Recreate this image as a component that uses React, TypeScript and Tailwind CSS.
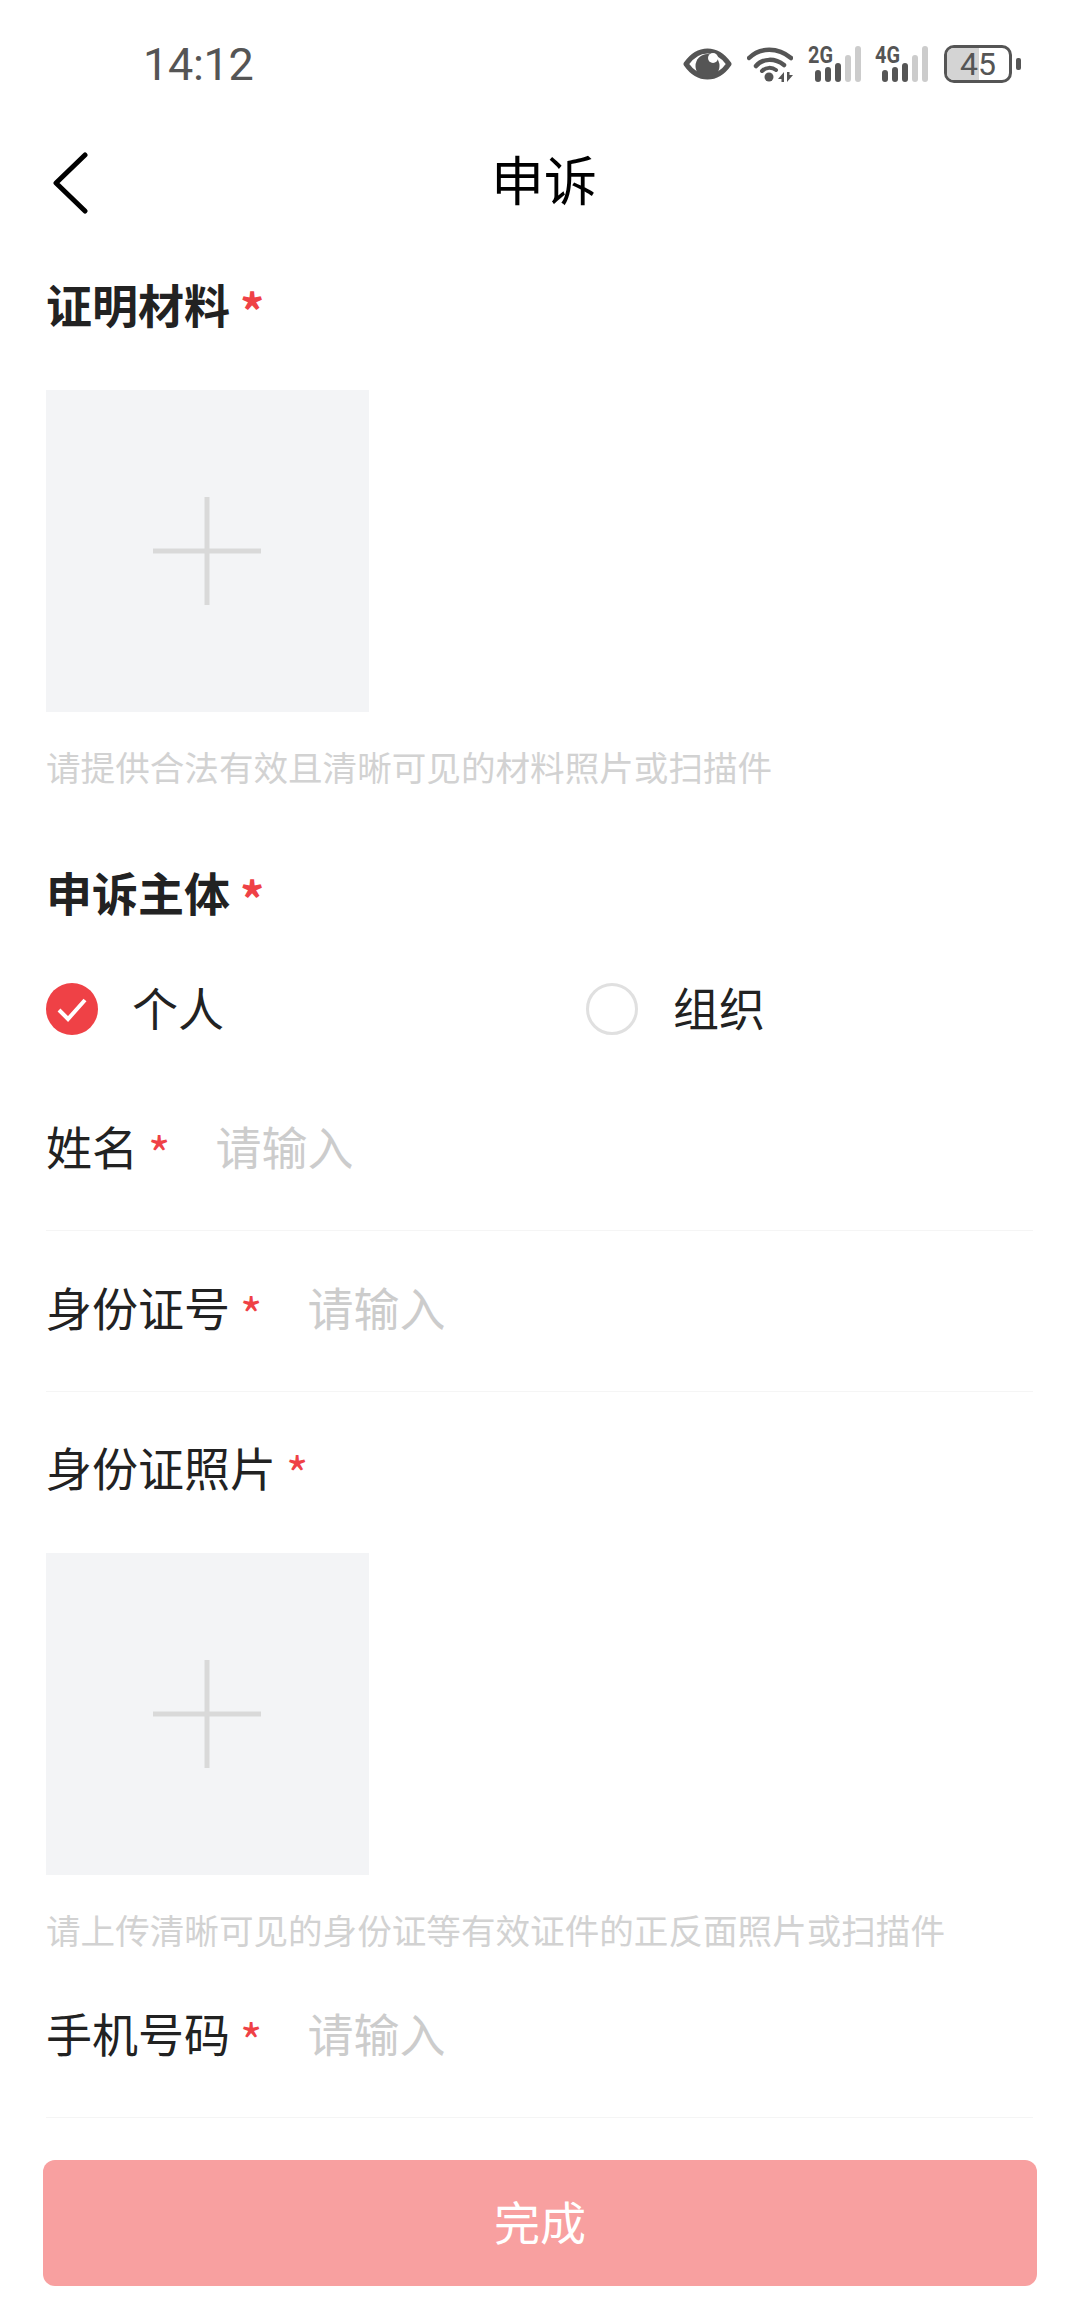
import React from 'react';

const CJK = "font-['Noto_Sans_CJK_SC','Noto_Sans',sans-serif]";

function Star({ bold = false }: { bold?: boolean }) {
  return (
    <span className={`ml-[10px] pt-[12px] text-[#ef4146] text-[48px] ${bold ? 'font-bold' : 'font-normal'}`}>*</span>
  );
}

function SectionTitle({ text }: { text: string }) {
  return (
    <div className="h-[72px] pb-[6px] flex items-center text-[46px] leading-[66px] font-bold text-[#222222]">
      {text}
      <Star bold />
    </div>
  );
}

function UploadBox() {
  return (
    <div className="w-[323px] h-[322px] mt-[48px] pr-[1px] bg-[#f3f4f6] flex items-center justify-center">
      <svg width="108" height="108" viewBox="0 0 108 108">
        <path d="M0 54H108M54 0V108" stroke="#d9d9d9" strokeWidth="5" />
      </svg>
    </div>
  );
}

function Hint({ text }: { text: string }) {
  return <div className="mt-[29px] h-[50px] text-[34.6px] leading-[50px] text-[#d2d2d2] whitespace-nowrap">{text}</div>;
}

function InputRow({ label, gap }: { label: string; gap: string }) {
  return (
    <div className="h-[161px] pb-[9px] flex items-center border-b border-[#f5f5f5] text-[46px] text-[#222222]">
      <span>{label}</span>
      <Star />
      <span className={`${gap} text-[#cccccc]`}>请输入</span>
    </div>
  );
}

function EyeIcon() {
  return (
    <svg width="49" height="32" viewBox="0 0 49 32">
      <path d="M3 16C10 6 17 3 24.5 3S39 6 46 16C39 26 32 29 24.5 29S10 26 3 16Z" fill="none" stroke="#555555" strokeWidth="5" strokeLinejoin="round" />
      <circle cx="24.5" cy="18" r="12" fill="#555555" />
      <circle cx="30" cy="10" r="5" fill="#ffffff" />
    </svg>
  );
}

function WifiIcon() {
  return (
    <svg width="46" height="36" viewBox="0 0 46 36">
      <path d="M2 12C13 1 31 1 44 12" fill="none" stroke="#555555" strokeWidth="4.5" strokeLinecap="round" />
      <path d="M9 20C16 12 28 12 37 19" fill="none" stroke="#555555" strokeWidth="4.5" strokeLinecap="round" />
      <path d="M15 25C19 21 25 21 29 24" fill="none" stroke="#555555" strokeWidth="4" strokeLinecap="round" />
      <circle cx="22" cy="31" r="4.5" fill="#555555" />
      <path d="M37 26V36H34.5V33H31ZM40 26H42.5V29H46L40 36Z" fill="#555555" />
    </svg>
  );
}

function SignalIcon({ label }: { label: string }) {
  const bars = [
    { x: 7, h: 12, c: '#555555' },
    { x: 17, h: 15, c: '#555555' },
    { x: 27, h: 19, c: '#555555' },
    { x: 37, h: 27, c: '#cccccc' },
    { x: 47, h: 36, c: '#cccccc' },
  ];
  return (
    <svg width="53" height="48" viewBox="0 -6 53 48">
      <text x="0" y="17" fontFamily="Roboto, sans-serif" fontWeight="700" fontSize="24" fill="#555555" textLength="25" lengthAdjust="spacingAndGlyphs">
        {label}
      </text>
      {bars.map((b) => (
        <rect key={b.x} x={b.x} y={36 - b.h} width="6" height={b.h} rx="3" fill={b.c} />
      ))}
    </svg>
  );
}

function Battery() {
  return (
    <div className="flex items-center">
      <div className="relative w-[68px] h-[38px] rounded-[10px] border-[3px] border-[#555555] overflow-hidden flex items-center justify-center">
        <div className="absolute left-0 top-0 bottom-0 w-[32px] bg-[#d4d4d4]" />
        <span className="relative text-[32px] leading-none text-[#555555] font-['Roboto',sans-serif]">45</span>
      </div>
      <div className="ml-[4px] w-[5px] h-[12px] rounded-[2px] bg-[#555555]" />
    </div>
  );
}

export default function App() {
  return (
    <div className={`w-[1080px] h-[2310px] bg-white overflow-hidden ${CJK}`}>
      {/* Status bar */}
      <div className="h-[128px] pl-[143px] pr-[59px] flex items-center justify-between">
        <span className="text-[45px] tracking-[-0.3px] leading-none text-[#555555] font-['Roboto',sans-serif]">14:12</span>
        <div className="flex items-center">
          <EyeIcon />
          <div className="ml-[15px]"><WifiIcon /></div>
          <div className="ml-[15px]"><SignalIcon label="2G" /></div>
          <div className="ml-[14px]"><SignalIcon label="4G" /></div>
          <div className="ml-[16px]"><Battery /></div>
        </div>
      </div>

      {/* Header */}
      <div className="relative h-[110px] flex items-center justify-center">
        <svg className="absolute left-[52px] top-[24px]" width="38" height="62" viewBox="0 0 38 62">
          <path d="M33 3L4 31L33 59" fill="none" stroke="#000000" strokeWidth="5" strokeLinecap="round" strokeLinejoin="round" />
        </svg>
        <span className="ml-[8px] pb-[9px] text-[53px] text-black">申诉</span>
      </div>

      {/* Form */}
      <div className="px-[46px] w-[1034px] box-content">
        <div className="mt-[32px]"><SectionTitle text="证明材料" /></div>
        <UploadBox />
        <Hint text="请提供合法有效且清晰可见的材料照片或扫描件" />

        <div className="mt-[67px]"><SectionTitle text="申诉主体" /></div>
        <div className="mt-[53px] h-[52px] flex items-center text-[46px] text-[#222222]">
          <div className="w-[540px] flex items-center">
            <svg width="52" height="52" viewBox="0 0 52 52">
              <circle cx="26" cy="26" r="26" fill="#ef4146" />
              <path d="M13 27L22 36L39 17" fill="none" stroke="#ffffff" strokeWidth="4" />
            </svg>
            <span className="ml-[34px] pb-[6px]">个人</span>
          </div>
          <div className="flex items-center">
            <div className="w-[52px] h-[52px] rounded-full border-[3px] border-[#e0e0e0]" />
            <span className="ml-[35px] pb-[6px]">组织</span>
          </div>
        </div>

        <div className="mt-[35px] w-[987px]">
          <InputRow label="姓名" gap="ml-[45px]" />
          <InputRow label="身份证号" gap="ml-[45px]" />
        </div>

        <div className="mt-[41px]">
          <div className="h-[72px] pb-[6px] flex items-center text-[46px] leading-[66px] text-[#222222]">
            身份证照片
            <Star />
          </div>
        </div>
        <UploadBox />
        <Hint text="请上传清晰可见的身份证等有效证件的正反面照片或扫描件" />

        <div className="mt-[3px] w-[987px]">
          <InputRow label="手机号码" gap="ml-[45px]" />
        </div>
      </div>

      {/* Submit */}
      <div className="mt-[42px] ml-[43px] w-[994px] h-[126px] pb-[6px] rounded-[12px] bg-[#f8a0a0] flex items-center justify-center text-[46px] text-white">
        完成
      </div>
    </div>
  );
}
